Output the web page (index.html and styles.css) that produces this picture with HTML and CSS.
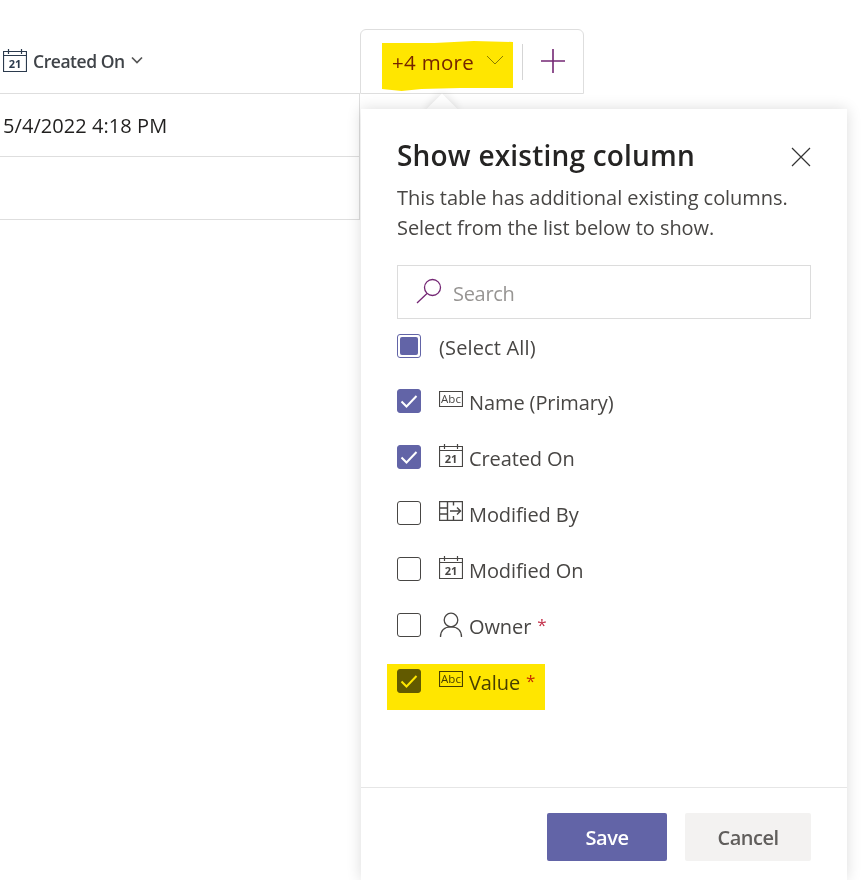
FILE: index.html
```html
<!DOCTYPE html>
<html lang="en">
<head>
<meta charset="utf-8">
<title>Show existing column</title>
<link rel="stylesheet" href="styles.css">
</head>
<body>
<svg class="defs" width="0" height="0" aria-hidden="true">
  <symbol id="check" viewBox="0 0 24 24">
    <path d="M4.500 12.500l5 5L19.500 7" fill="none" stroke="currentColor" stroke-width="2"/>
  </symbol>
</svg>

<main class="grid">
  <div class="cols">
    <div class="col-created">
      <div class="head-cell">
        <svg class="cal-head" viewBox="0 0 24 24"><path d="M.5 3.500h23v20H.5zM.5 7.500h23M5.500 1v5M18.500 1v5" fill="none" stroke="currentColor" stroke-width="1.200"/><text x="12" y="20" text-anchor="middle" class="icon-num">21</text></svg>
        <span class="head-label">Created On</span>
        <svg class="head-chev" viewBox="0 0 12 8"><path d="M1 1.500l5 5 5-5" fill="none" stroke="currentColor" stroke-width="1.700"/></svg>
      </div>
      <div class="cell">5/4/2022 4:18 PM</div>
      <div class="cell"></div>
    </div>
    <div class="col-more">
      <div class="more-box">
        <button class="more-btn"><span class="more-text">+4 more</span>
          <svg class="more-chev" viewBox="0 0 18 10"><path d="M1 1l8 8 8-8" fill="none" stroke="currentColor"/></svg>
        </button>
        <span class="more-sep"></span>
        <svg class="plus" viewBox="0 0 26 26"><path d="M13 1v24M1 13h24" fill="none" stroke="currentColor" stroke-width="1.600"/></svg>
      </div>
    </div>
  </div>
</main>

<div class="beak"></div>
<aside class="panel">
  <div class="panel-body">
    <div class="panel-head">
      <h1 class="title">Show existing column</h1>
      <svg class="close" viewBox="0 0 20 20"><path d="M1 1l18 18M19 1L1 19" fill="none" stroke="currentColor" stroke-width="1.200"/></svg>
    </div>
    <p class="desc">This table has additional existing columns.<br>Select from the list below to show.</p>
    <div class="search">
      <svg class="search-ico" viewBox="0 0 26 26"><circle cx="16.500" cy="9.500" r="8" fill="none" stroke="currentColor" stroke-width="1.300"/><path d="M11 15.500L1 25" fill="none" stroke="currentColor" stroke-width="1.300"/></svg>
      <span class="search-ph">Search</span>
    </div>
    <ul class="list">
      <li class="row row-all"><span class="box box-partial"><span class="box-fill"></span></span><span class="label-all">(Select All)</span></li>
      <li class="row"><span class="box box-on"><svg><use href="#check"/></svg></span><svg class="ico ico-abc" viewBox="0 0 24 16"><path d="M.5.5h23v15H.5z" fill="none" stroke="currentColor" stroke-width="1.200"/><text x="12" y="12" text-anchor="middle" class="icon-abc">Abc</text></svg><span class="label">Name (Primary)</span></li>
      <li class="row"><span class="box box-on"><svg><use href="#check"/></svg></span><svg class="ico ico-cal" viewBox="0 0 24 24"><path d="M.5 3.500h23v20H.5zM.5 7.500h23M5.500 1v5M18.500 1v5" fill="none" stroke="currentColor" stroke-width="1.200"/><text x="12" y="20" text-anchor="middle" class="icon-num">21</text></svg><span class="label">Created On</span></li>
      <li class="row"><span class="box"></span><svg class="ico ico-lookup" viewBox="0 0 24 20"><path d="M.5.5h23v19H.5zM.5 7h8M.5 13h8M8.500.5v19M14.500.5v4M14.500 15v4.500M11 10h11M18 6.500l3.500 3.500-3.500 3.500" fill="none" stroke="currentColor" stroke-width="1.400"/></svg><span class="label">Modified By</span></li>
      <li class="row"><span class="box"></span><svg class="ico ico-cal" viewBox="0 0 24 24"><path d="M.5 3.500h23v20H.5zM.5 7.500h23M5.500 1v5M18.500 1v5" fill="none" stroke="currentColor" stroke-width="1.200"/><text x="12" y="20" text-anchor="middle" class="icon-num">21</text></svg><span class="label">Modified On</span></li>
      <li class="row"><span class="box"></span><svg class="ico ico-owner" viewBox="0 0 24 25"><circle cx="12" cy="8" r="6.800" fill="none" stroke="currentColor" stroke-width="1.300"/><path d="M1.500 25c0-6.500 4-10.200 10.500-10.200S22.500 18.500 22.500 25" fill="none" stroke="currentColor" stroke-width="1.300"/></svg><span class="label">Owner</span><span class="req">*</span></li>
      <li class="row"><span class="box box-on"><svg><use href="#check"/></svg></span><svg class="ico ico-abc" viewBox="0 0 24 16"><path d="M.5.5h23v15H.5z" fill="none" stroke="currentColor" stroke-width="1.200"/><text x="12" y="12" text-anchor="middle" class="icon-abc">Abc</text></svg><span class="label">Value</span><span class="req">*</span></li>
    </ul>
  </div>
  <footer class="panel-foot">
    <button class="btn btn-save">Save</button>
    <button class="btn btn-cancel">Cancel</button>
  </footer>
</aside>

<div class="hl hl-more"></div>
<div class="hl hl-value"></div>
</body>
</html>
```

FILE: styles.css
```css
* { box-sizing: border-box; }
html, body { margin: 0; height: 880px; overflow: hidden; background: #fff; }
body {
  position: relative;
  font-family: "Open Sans", "Noto Sans", sans-serif;
  color: #323130;
}
.defs { position: absolute; }
.icon-num { font: 700 11px "Open Sans", sans-serif; fill: currentColor; }
.icon-abc { font: 500 11.500px "Open Sans", sans-serif; fill: currentColor; }

.cols { display: flex; }
.col-created { width: 360px; height: 220px; }
.head-cell {
  height: 94px;
  border-bottom: 1px solid #dedede;
  display: flex;
  align-items: center;
  padding: 29px 0 0 3px;
  color: #323a45;
}
.cal-head { width: 24px; height: 24px; flex: none; color: #2b3a4d; margin-top: -3px; }
.head-label { margin-left: 6px; font-size: 17.500px; font-weight: 600; letter-spacing: -.45px; color: #3f4348; }
.head-chev { width: 12px; height: 8px; margin: -2px 0 0 6px; color: #555; }
.cell {
  height: 63px;
  border-bottom: 1px solid #dedede;
  border-right: 1px solid #dedede;
  padding-left: 3px;
  display: flex;
  align-items: center;
  font-size: 20px;
  letter-spacing: .06px;
  color: #201f1e;
}

.col-more { padding-top: 29px; }
.more-box {
  width: 224px;
  height: 65px;
  border: 1px solid #dedede;
  border-radius: 6px 6px 0 0;
  display: flex;
  align-items: center;
  padding: 0 18px 0 31px;
}
.more-btn {
  border: 0; background: none; padding: 0;
  font: 400 20.500px "Open Sans", sans-serif;
  letter-spacing: .3px;
  color: #742774;
  display: flex;
  align-items: center;
  flex: none;
}
.more-text { white-space: nowrap; }
.more-chev { width: 18px; height: 10px; margin-left: 12px; margin-top: -4px; color: #8a8a8a; }
.more-sep { width: 1px; height: 36px; background: #d5d5d5; margin-left: 18px; flex: none; }
.plus { width: 26px; height: 26px; color: #742774; margin-left: 17px; margin-top: -2px; flex: none; }

.panel {
  position: absolute;
  left: 361px;
  top: 109px;
  width: 486px;
  height: 771px;
  background: #fff;
  box-shadow: 0 0 14px rgba(0, 0, 0, .14);
  display: flex;
  flex-direction: column;
}
.beak {
  position: absolute;
  left: 431px;
  top: 98px;
  width: 22px;
  height: 22px;
  background: #fff;
  transform: rotate(45deg);
  box-shadow: 0 0 10px rgba(0, 0, 0, .14);
}
.panel-body { flex: 1; padding: 26px 36px 0; }
.panel-head { display: flex; justify-content: space-between; align-items: center; height: 40px; }
.title { margin: 0; font-size: 28px; font-weight: 600; letter-spacing: .2px; color: #252423; }
.close { width: 20px; height: 20px; color: #333; margin-top: 3px; }
.desc { margin: 8px 0 22px; font-size: 20px; line-height: 30px; letter-spacing: -.05px; color: #484644; }
.search {
  height: 54px;
  border: 1px solid #dcdcdc;
  display: flex;
  align-items: center;
  padding: 0 0 0 18px;
}
.search-ico { width: 26px; height: 26px; color: #742774; margin-top: -2px; }
.search-ph { margin-left: 11px; font-size: 20px; letter-spacing: -.3px; color: #979593; position: relative; top: 1px; }

.list { list-style: none; margin: 15px 0 0; padding: 0; }
.row { display: flex; align-items: flex-start; height: 56px; font-size: 20px; color: #484644; }
.row-all { height: 55px; }
.box {
  width: 24px; height: 24px; flex: none;
  border: 1px solid #484644;
  border-radius: 3px;
  display: flex; align-items: center; justify-content: center;
  margin-right: 18px;
  color: #fff;
}
.box svg { width: 24px; height: 24px; flex: none; }
.box-on { background: #6264a7; border-color: #6264a7; }
.box-partial { border-color: #6264a7; }
.box-fill { width: 18px; height: 18px; background: #6264a7; border-radius: 2px; }
.label-all { line-height: 27px; letter-spacing: .15px; }
.ico { flex: none; color: #484644; }
.ico-abc { width: 24px; height: 16px; margin-top: 2px; }
.ico-cal { width: 24px; height: 24px; margin-top: -2px; }
.ico-lookup { width: 24px; height: 20px; margin-top: 0; }
.ico-owner { width: 24px; height: 25px; margin-top: -1px; }
.label { margin-left: 6px; line-height: 27px; letter-spacing: -.1px; }
.req { margin-left: 6px; font-size: 17px; color: #c4314b; line-height: 24px; }

.panel-foot {
  height: 93px;
  border-top: 1px solid #e6e6e6;
  padding: 25px 36px 0 0;
  display: flex;
  justify-content: flex-end;
  gap: 18px;
  align-items: flex-start;
}
.btn {
  height: 48px;
  border: 0;
  border-radius: 2px;
  font: 600 20px "Open Sans", sans-serif;
  letter-spacing: -.5px;
}
.btn-save { width: 120px; background: #6264a7; color: #fff; }
.btn-cancel { width: 126px; background: #f3f2f1; color: #605e5c; }

.hl { position: absolute; background: #ffe600; mix-blend-mode: multiply; }
.hl-more {
  left: 382px; top: 41px; width: 131px; height: 50px;
  clip-path: polygon(0 4%, 40% 4%, 70% 0, 100% 2%, 100% 94%, 60% 94%, 30% 96%, 15% 100%, 0 96%);
}
.hl-value { left: 387px; top: 664px; width: 158px; height: 46px; }
```
